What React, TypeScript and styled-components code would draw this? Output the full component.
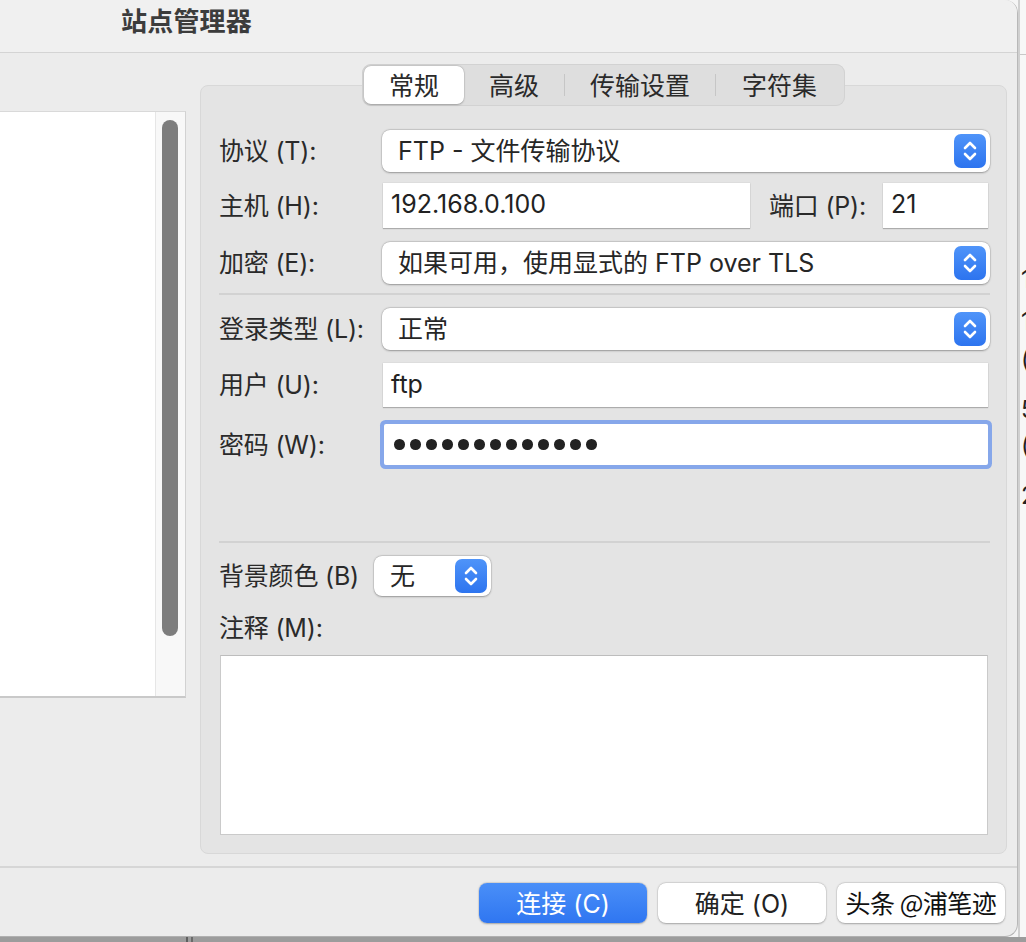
import React from "react";
import styled, { createGlobalStyle } from "styled-components";

const GlobalStyle = createGlobalStyle`
  html, body { margin: 0; padding: 0; }
  body {
    width: 1026px;
    height: 942px;
    overflow: hidden;
    background: #9a9a9a;
    font-family: Inter, "Noto Sans CJK SC", sans-serif;
    color: #262626;
  }
  * { box-sizing: border-box; }
`;

const Screen = styled.div`
  width: 1026px;
  height: 942px;
  display: flex;
  flex-direction: column;
  overflow: hidden;
`;

const TopArea = styled.div`
  display: flex;
  height: 937px;
  background: #f5f5f5;
`;

const Window = styled.div`
  width: 1018px;
  height: 937px;
  flex: none;
  background: #ececec;
  border-right: 1px solid #b8b8b8;
  border-bottom: 1px solid #b0b0b0;
  border-radius: 0 13px 13px 0;
  display: flex;
  flex-direction: column;
  overflow: hidden;
`;

const TitleBar = styled.div`
  height: 53px;
  flex: none;
  background: #f0f0f0;
  border-bottom: 1px solid #d4d4d4;
  padding: 6px 0 0 121px;
`;

const Title = styled.div`
  font-size: 26px;
  font-weight: 700;
  line-height: 32px;
  color: #3c3c3c;
  letter-spacing: 0.2px;
`;

const Body = styled.div`
  display: flex;
  height: 815px;
  flex: none;
  padding-right: 10px;
  border-bottom: 2px solid #d6d6d6;
`;

const LeftColumn = styled.div`
  width: 186px;
  flex: none;
  margin-top: 58px;
  height: 587px;
  display: flex;
  background: #fff;
  border-top: 1px solid #d9d9d9;
  border-bottom: 2px solid #c9c9c9;
  border-right: 1px solid #d2d2d2;
`;

const ListArea = styled.div`
  flex: 1;
  background: #fff;
`;

const ScrollTrack = styled.div`
  width: 30px;
  flex: none;
  background: #f8f8f8;
  border-left: 1px solid #e6e6e6;
  padding: 8px 0 0 6px;
`;

const ScrollThumb = styled.div`
  width: 16px;
  height: 516px;
  border-radius: 8px;
  background: #7d7d7d;
`;

const RightColumn = styled.div`
  flex: 1;
  margin-left: 14px;
  padding-top: 11px;
  display: flex;
  flex-direction: column;
  align-items: stretch;
`;

const TabsWrap = styled.div`
  display: flex;
  justify-content: center;
  margin-bottom: -21px;
  position: relative;
  z-index: 1;
`;

const Tabs = styled.div`
  display: flex;
  align-items: center;
  height: 42px;
  padding: 2px;
  border-radius: 9px;
  background: #dedede;
  box-shadow: inset 0 0 0 1px #d2d2d2;
`;

const Tab = styled.div<{ $active?: boolean; $w: number }>`
  height: 38px;
  display: flex;
  align-items: center;
  padding: 0 ${(p) => p.$w}px 3px;
  font-size: 25px;
  color: #2a2a2a;
  border-radius: 7px;
  background: ${(p) => (p.$active ? "#fff" : "transparent")};
  box-shadow: ${(p) =>
    p.$active ? "0 0.5px 2px rgba(0,0,0,0.25), 0 0 0 0.5px rgba(0,0,0,0.08)" : "none"};
`;

const TabSep = styled.div`
  width: 1px;
  height: 22px;
  background: #c6c6c6;
`;

const Panel = styled.div`
  background: #e4e4e4;
  border: 1px solid #d8d8d8;
  border-radius: 8px;
  padding: 44px 16px 18px 18px;
  display: flex;
  flex-direction: column;
`;

const Row = styled.div<{ $top: number; $h: number }>`
  display: flex;
  align-items: center;
  margin-top: ${(p) => p.$top}px;
  height: ${(p) => p.$h}px;
`;

const Label = styled.div<{ $w?: number }>`
  width: ${(p) => (p.$w ? `${p.$w}px` : "auto")};
  flex: none;
  font-size: 25px;
  color: #2a2a2a;
  white-space: nowrap;
  padding-bottom: 4px;
  letter-spacing: -0.2px;
`;

const Select = styled.div<{ $w?: number; $left?: number }>`
  flex: ${(p) => (p.$w ? "none" : "1")};
  width: ${(p) => (p.$w ? `${p.$w}px` : "auto")};
  margin-left: ${(p) => p.$left ?? 0}px;
  height: 100%;
  background: #fff;
  border-radius: 8px;
  box-shadow: 0 0.5px 2px rgba(0, 0, 0, 0.3), 0 0 0 0.5px rgba(0, 0, 0, 0.12);
  display: flex;
  align-items: center;
  padding: 0 4px 0 16px;
`;

const SelectText = styled.div`
  flex: 1;
  font-size: 25px;
  color: #262626;
  white-space: nowrap;
  padding-bottom: 4px;
`;

const Stepper = styled.div`
  width: 32px;
  height: 34px;
  border-radius: 7px;
  background: linear-gradient(#4f94f9, #2d74ef);
  display: flex;
  align-items: center;
  justify-content: center;
`;

const Input = styled.div<{ $w?: number }>`
  flex: ${(p) => (p.$w ? "none" : "1")};
  width: ${(p) => (p.$w ? `${p.$w}px` : "auto")};
  height: 100%;
  background: #fff;
  margin: 0 2px 0 1px;
  box-shadow: 0 1px 1px rgba(0, 0, 0, 0.22), 0 0 0 0.5px rgba(0, 0, 0, 0.06);
  display: flex;
  align-items: center;
  padding: 0 0 3px 8px;
  font-size: 25px;
  color: #222;
`;

const FocusInput = styled.div`
  flex: 1;
  height: 100%;
  margin: 0 2px 0 2px;
  background: #fff;
  border-radius: 2px;
  box-shadow: 0 0 0 4px #86a7ea;
  display: flex;
  align-items: center;
  gap: 5.5px;
  padding-left: 10px;
`;

const Dot = styled.span`
  width: 10.5px;
  height: 10.5px;
  border-radius: 50%;
  background: #222;
`;

const PortLabel = styled.div`
  margin: 0 16px 0 17px;
  padding-bottom: 4px;
  font-size: 25px;
  color: #2a2a2a;
  white-space: nowrap;
  letter-spacing: -0.2px;
`;

const Separator = styled.div<{ $top: number }>`
  margin-top: ${(p) => p.$top}px;
  height: 2px;
  background: #d2d2d2;
`;

const NoteBox = styled.div`
  margin-top: 12px;
  height: 180px;
  margin-right: 2px;
  margin-left: 1px;
  background: #fff;
  border: 1px solid #cacaca;
  border-top-color: #bdbdbd;
`;

const Footer = styled.div`
  flex: 1;
  display: flex;
  justify-content: flex-end;
  align-items: flex-start;
  padding: 15px 12px 0 0;
  gap: 11px;
`;

const Button = styled.div<{ $primary?: boolean }>`
  width: 168px;
  height: 40px;
  border-radius: 8px;
  display: flex;
  align-items: center;
  justify-content: center;
  padding-bottom: 3px;
  font-size: 25px;
  color: ${(p) => (p.$primary ? "#fff" : "#222")};
  background: ${(p) => (p.$primary ? "linear-gradient(#4a8ff8, #2f76f1)" : "#fff")};
  box-shadow: 0 0.5px 2px rgba(0, 0, 0, 0.28), 0 0 0 0.5px rgba(0, 0, 0, 0.08);
`;

const Watermark = styled.span`
  font-family: "Noto Sans CJK SC", sans-serif;
  font-size: 25px;
  color: #111;
  letter-spacing: -0.5px;
  white-space: nowrap;
`;

const BackWindow = styled.div`
  flex: 1;
  background: #f7f7f7;
  border-left: 2px solid #d0d0d0;
  display: flex;
  flex-direction: column;
  overflow: hidden;
`;

const BackTop = styled.div`
  height: 55px;
  border-bottom: 1px solid #c8c8c8;
`;

const BackGlyph = styled.div<{ $top: number }>`
  margin-top: ${(p) => p.$top}px;
  height: 30px;
  line-height: 30px;
  font-size: 24px;
  color: #222;
  white-space: nowrap;
  padding-left: 1px;
`;

const BottomStrip = styled.div`
  height: 5px;
  background: #9c9c9c;
  display: flex;
`;

const StripLeft = styled.div`
  width: 188px;
  border-right: 2px solid #5f5f5f;
`;

const StripMid = styled.div`
  width: 5px;
  border-right: 2px solid #6a6a6a;
`;

const Chevrons = () => (
  <svg width="16" height="26" viewBox="0 0 16 26" fill="none">
    <path d="M3 10 L8 5 L13 10" stroke="#fff" strokeWidth="2.6" strokeLinecap="round" strokeLinejoin="round" />
    <path d="M3 16 L8 21 L13 16" stroke="#fff" strokeWidth="2.6" strokeLinecap="round" strokeLinejoin="round" />
  </svg>
);

const LABEL_W = 163;

export default function App() {
  return (
    <Screen>
      <GlobalStyle />
      <TopArea>
        <Window>
          <TitleBar>
            <Title>站点管理器</Title>
          </TitleBar>
          <Body>
            <LeftColumn>
              <ListArea />
              <ScrollTrack>
                <ScrollThumb />
              </ScrollTrack>
            </LeftColumn>
            <RightColumn>
              <TabsWrap>
                <Tabs>
                  <Tab $active $w={25}>常规</Tab>
                  <Tab $w={25}>高级</Tab>
                  <TabSep />
                  <Tab $w={25}>传输设置</Tab>
                  <TabSep />
                  <Tab $w={26}>字符集</Tab>
                </Tabs>
              </TabsWrap>
              <Panel>
                <Row $top={0} $h={42}>
                  <Label $w={LABEL_W}>协议 (T):</Label>
                  <Select>
                    <SelectText>FTP - 文件传输协议</SelectText>
                    <Stepper><Chevrons /></Stepper>
                  </Select>
                </Row>
                <Row $top={11} $h={45}>
                  <Label $w={LABEL_W}>主机 (H):</Label>
                  <Input>192.168.0.100</Input>
                  <PortLabel>端口 (P):</PortLabel>
                  <Input $w={105}>21</Input>
                </Row>
                <Row $top={14} $h={42}>
                  <Label $w={LABEL_W}>加密 (E):</Label>
                  <Select>
                    <SelectText>如果可用，使用显式的 FTP over TLS</SelectText>
                    <Stepper><Chevrons /></Stepper>
                  </Select>
                </Row>
                <Separator $top={9} />
                <Row $top={13} $h={42}>
                  <Label $w={LABEL_W}>登录类型 (L):</Label>
                  <Select>
                    <SelectText>正常</SelectText>
                    <Stepper><Chevrons /></Stepper>
                  </Select>
                </Row>
                <Row $top={13} $h={44}>
                  <Label $w={LABEL_W}>用户 (U):</Label>
                  <Input>ftp</Input>
                </Row>
                <Row $top={17} $h={41}>
                  <Label $w={LABEL_W}>密码 (W):</Label>
                  <FocusInput>
                    {Array.from({ length: 13 }).map((_, i) => (
                      <Dot key={i} />
                    ))}
                  </FocusInput>
                </Row>
                <Separator $top={76} />
                <Row $top={13} $h={40}>
                  <Label>背景颜色 (B)</Label>
                  <Select $w={117} $left={15}>
                    <SelectText>无</SelectText>
                    <Stepper><Chevrons /></Stepper>
                  </Select>
                </Row>
                <Row $top={17} $h={30}>
                  <Label>注释 (M):</Label>
                </Row>
                <NoteBox />
              </Panel>
            </RightColumn>
          </Body>
          <Footer>
            <Button $primary>连接 (C)</Button>
            <Button>确定 (O)</Button>
            <Button>
              <Watermark>头条 @浦笔迹</Watermark>
            </Button>
          </Footer>
        </Window>
        <BackWindow>
          <BackTop />
          <BackGlyph $top={210}>1</BackGlyph>
          <BackGlyph $top={12}>1</BackGlyph>
          <BackGlyph $top={8}>(</BackGlyph>
          <BackGlyph $top={20}>5</BackGlyph>
          <BackGlyph $top={6}>(</BackGlyph>
          <BackGlyph $top={20}>2</BackGlyph>
        </BackWindow>
      </TopArea>
      <BottomStrip>
        <StripLeft />
        <StripMid />
      </BottomStrip>
    </Screen>
  );
}
